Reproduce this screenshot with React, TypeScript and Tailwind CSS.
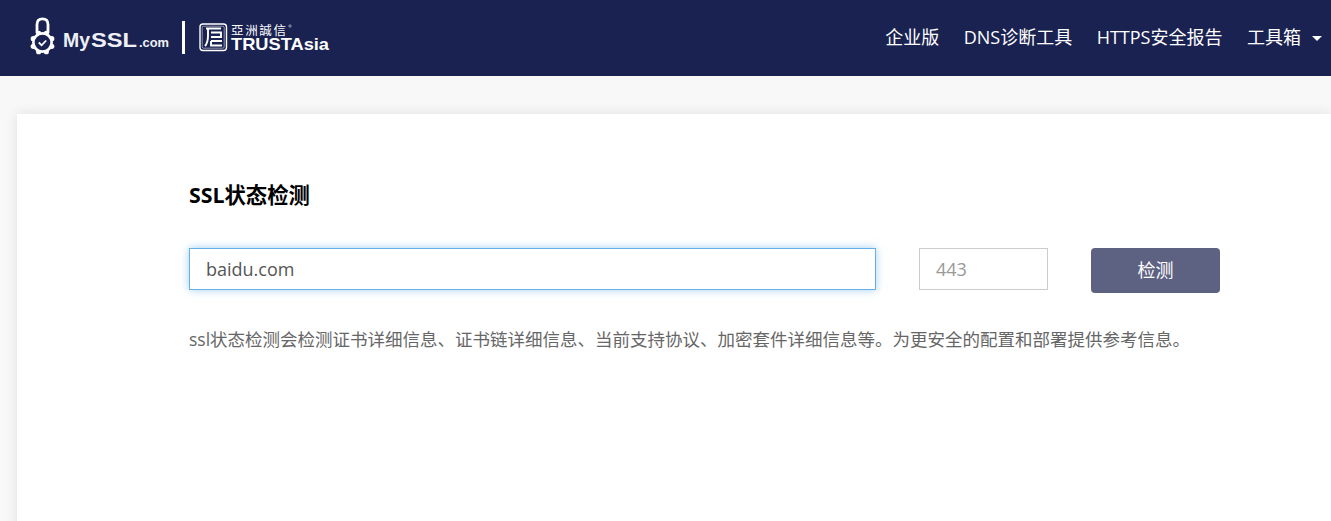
import React from 'react';

const fontStack = '[font-family:"Open_Sans","Noto_Sans_CJK_SC",sans-serif]';

// scallops round the lock's wheel, at 45 degree steps
const gearBumps = [0, 1, 2, 3, 4, 5, 6, 7].map((i) => ({
  cx: 42.5 + 10 * Math.cos((i * Math.PI) / 4 + Math.PI / 8),
  cy: 42.5 + 10 * Math.sin((i * Math.PI) / 4 + Math.PI / 8),
}));

// logo drawn in header coordinates, the texts are stretched to the logo's widths
function Logo() {
  return (
    <svg width="340" height="76" viewBox="0 0 340 76" fill="none" className="shrink-0">
      <path d="M37 33V24.500C37 20.500 39 18.800 42.500 18.800S48 20.500 48 24.500V33" stroke="#fff" strokeWidth="2.800" />
      <circle cx="42.500" cy="42.500" r="10.500" fill="#fff" />
      {gearBumps.map((b, i) => (
        <circle key={i} cx={b.cx} cy={b.cy} r="2.600" fill="#fff" />
      ))}
      <circle cx="42.500" cy="42.500" r="7.800" fill="#1a2251" />
      <path d="M38.800 42.500l2.800 2.800 4.600-4.800" stroke="#fff" strokeWidth="1.800" />
      <g fill="#eef0f5" fontFamily="'Liberation Sans', sans-serif" fontWeight="700">
        <text x="63" y="47" fontSize="20" textLength="27" lengthAdjust="spacingAndGlyphs">My</text>
        <text x="91" y="47" fontSize="20.500" textLength="46" lengthAdjust="spacingAndGlyphs">SSL</text>
        <text x="139" y="47" fontSize="13.500" textLength="30" lengthAdjust="spacingAndGlyphs">.com</text>
      </g>
      <rect x="182" y="21" width="3" height="33" fill="#fff" />
      <rect x="200" y="24" width="26.500" height="26.500" rx="3" stroke="#fff" strokeWidth="1.400" />
      <rect x="202.200" y="26.200" width="22" height="22" rx="1.500" stroke="#fff" strokeWidth="0.500" />
      <path d="M206 28.500h15M208 28.500v7c0 5-.8 8-3 10.500M211 32.500h10V37H211M211 41h11M211 41v4.500h11" stroke="#fff" strokeWidth="1.900" />
      <text x="231" y="35" fill="#fff" fontSize="12.500" fontFamily="'Noto Sans CJK TC', sans-serif" textLength="55">亞洲誠信</text>
      <circle cx="290" cy="26" r="1.200" stroke="#fff" strokeWidth="0.500" />
      <text x="231" y="49.500" fill="#fff" fontSize="17" fontWeight="700" fontFamily="'Liberation Sans', sans-serif" textLength="98" lengthAdjust="spacingAndGlyphs">TRUSTAsia</text>
    </svg>
  );
}

function Header() {
  return (
    <header className="h-[76px] bg-[#1a2251] flex items-center justify-between pr-[9px]">
      <Logo />
      <nav className="flex items-center gap-[24.500px] text-white text-[18px] -mt-[2px]">
        <a>企业版</a>
        <a>DNS诊断工具</a>
        <a>HTTPS安全报告</a>
        <a className="flex items-center">
          工具箱
          <span className="ml-[11px] mt-[3px] border-x-[5px] border-x-transparent border-t-[5px] border-t-white" />
        </a>
      </nav>
    </header>
  );
}

export default function App() {
  return (
    <div className={`h-[521px] overflow-hidden bg-[#f8f8f8] ${fontStack}`}>
      <Header />
      <main className="ml-[17px] mt-[38px] h-[500px] bg-white shadow-[0_0_12px_rgba(0,0,0,0.1)] pl-[172px] pr-[111px] pt-[67px]">
        <h1 className="text-[21.330px] leading-[28px] font-bold text-black">SSL状态检测</h1>
        <form className="mt-[39px] flex items-start">
          <input
            defaultValue="baidu.com"
            className="w-[687px] h-[42px] border border-[#66afe9] pl-[16px] text-[18px] text-[#555] outline-none shadow-[0_0_8px_rgba(102,175,233,0.6)]"
          />
          <input
            placeholder="443"
            className="ml-[43px] w-[129px] h-[42px] border border-[#ccc] pl-[16px] text-[18px] text-[#555] outline-none placeholder:text-[#999]"
          />
          <button type="button" className="ml-[43px] w-[129px] h-[45px] rounded-[4px] bg-[#5d6182] text-white text-[18px]">
            检测
          </button>
        </form>
        <p className="mt-[33px] text-[17.500px] leading-[26px] text-[#666] whitespace-nowrap">
          ssl状态检测会检测证书详细信息、证书链详细信息、当前支持协议、加密套件详细信息等。为更安全的配置和部署提供参考信息。
        </p>
      </main>
    </div>
  );
}
